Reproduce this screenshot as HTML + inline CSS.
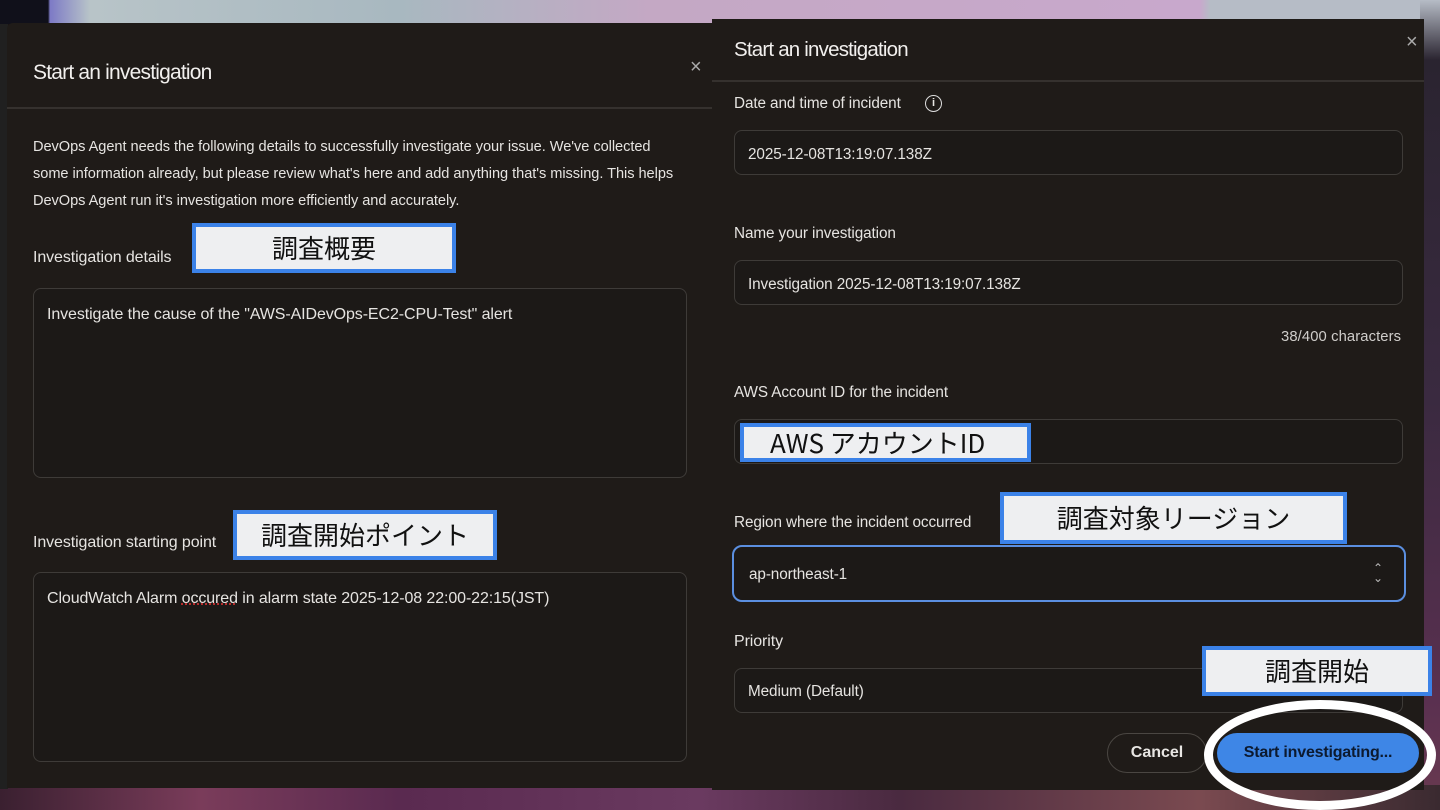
<!DOCTYPE html>
<html><head><meta charset="utf-8"><style>
*{margin:0;padding:0;box-sizing:border-box}
body{width:1440px;height:810px;overflow:hidden;position:relative;background:#1a1414;font-family:"Liberation Sans","Noto Sans CJK JP",sans-serif;color:#e8e6e3}
.a{position:absolute}
.t{font-size:15.3px;letter-spacing:-0.1px;color:#e6e4e1;white-space:nowrap}
.box{position:absolute;border:1px solid #3e3b38;border-radius:8px;background:#1c1917}
.lbl{position:absolute;background:#eeeff1;border:4px solid #3b82e8;color:#111;font-size:26px;font-family:"Noto Sans CJK JP",sans-serif;text-align:center;line-height:36px;white-space:nowrap}
</style></head><body>
<div class="a" style="left:0;top:0;width:1440px;height:24px;background:linear-gradient(90deg,#10101a 0,#10101a 48px,#7d7ac6 50px,#b8c4c8 90px,#a8b8c0 400px,#c4a8c4 650px,#c8a8cc 1200px,#b6bcc6 1210px,#b6bcc6 1440px)"></div>
<div class="a" style="left:1420px;top:0;width:20px;height:810px;background:linear-gradient(180deg,#b6bcc6 0,#2a2430 60px,#3a2a40 400px,#5a3050 700px,#6a3a50 810px)"></div>
<div class="a" style="left:0;top:785px;width:1440px;height:25px;background:linear-gradient(90deg,#3a2030,#7a3c5a 200px,#5a2a50 400px,#6a3a60 700px,#4a2a40 900px,#7a4a50 1200px,#3a2a30)"></div>
<div class="a" style="left:0;top:24px;width:8px;height:765px;background:#202020"></div>

<!-- Left panel -->
<div class="a" style="left:7px;top:23px;width:706px;height:765px;background:#1f1b18;border-radius:6px 0 0 0"></div>
<div class="a t" style="left:33px;top:61px;font-size:21px;letter-spacing:-0.8px;color:#f2f0ee">Start an investigation</div>
<div class="a" style="left:690px;top:56px;font-size:20px;color:#aaa">×</div>
<div class="a" style="left:7px;top:107px;width:706px;height:2px;background:#35312e"></div>
<div class="a t" style="left:33px;top:134px;line-height:27px;font-size:14.6px;letter-spacing:-0.05px">DevOps Agent needs the following details to successfully investigate your issue. We've collected<br>some information already, but please review what's here and add anything that's missing. This helps<br>DevOps Agent run it's investigation more efficiently and accurately.</div>
<div class="a t" style="left:33px;top:249px;font-size:16px">Investigation details</div>
<div class="box" style="left:33px;top:288px;width:654px;height:190px"></div>
<div class="a t" style="left:47px;top:306px;font-size:16px">Investigate the cause of the "AWS-AIDevOps-EC2-CPU-Test" alert</div>
<div class="a t" style="left:33px;top:534px;font-size:16px">Investigation starting point</div>
<div class="box" style="left:33px;top:572px;width:654px;height:190px"></div>
<div class="a t" style="left:47px;top:590px;font-size:16px">CloudWatch Alarm <span style="text-decoration:underline dotted #d33">occured</span> in alarm state 2025-12-08 22:00-22:15(JST)</div>
<div class="lbl" style="left:192px;top:223px;width:264px;height:50px;line-height:42px">調査概要</div>
<div class="lbl" style="left:233px;top:510px;width:264px;height:50px;line-height:42px">調査開始ポイント</div>

<!-- Right panel -->
<div class="a" style="left:712px;top:19px;width:712px;height:771px;background:#1f1b18"></div>
<div class="a t" style="left:734px;top:38px;font-size:20.5px;letter-spacing:-0.8px;color:#f2f0ee">Start an investigation</div>
<div class="a" style="left:1406px;top:31px;font-size:20px;color:#aaa">×</div>
<div class="a" style="left:712px;top:80px;width:712px;height:2px;background:#35312e"></div>
<div class="a t" style="left:734px;top:95px">Date and time of incident</div>
<div class="a" style="left:925px;top:95px;width:17px;height:17px;border:1.5px solid #ddd;border-radius:50%;font-size:11px;text-align:center;line-height:14px;font-weight:bold">i</div>
<div class="box" style="left:734px;top:130px;width:669px;height:45px"></div>
<div class="a t" style="left:748px;top:146px">2025-12-08T13:19:07.138Z</div>
<div class="a t" style="left:734px;top:225px">Name your investigation</div>
<div class="box" style="left:734px;top:260px;width:669px;height:45px"></div>
<div class="a t" style="left:748px;top:276px">Investigation 2025-12-08T13:19:07.138Z</div>
<div class="a t" style="left:1281px;top:329px;font-size:14.8px;letter-spacing:0.1px;color:#cfcdca">38/400 characters</div>
<div class="a t" style="left:734px;top:384px">AWS Account ID for the incident</div>
<div class="box" style="left:734px;top:419px;width:669px;height:45px"></div>
<div class="a t" style="left:734px;top:514px">Region where the incident occurred</div>
<div class="box" style="left:732px;top:545px;width:674px;height:57px;border:2px solid #5b8fe0;border-radius:10px"></div>
<div class="a t" style="left:749px;top:566px">ap-northeast-1</div>
<div class="a" style="left:1373px;top:563px;font-size:12px;color:#bbb;line-height:10px">⌃<br>⌄</div>
<div class="a t" style="left:734px;top:633px;font-size:16px">Priority</div>
<div class="box" style="left:734px;top:668px;width:669px;height:45px"></div>
<div class="a t" style="left:748px;top:683px">Medium (Default)</div>
<div class="a" style="left:1107px;top:733px;width:100px;height:40px;border:1.5px solid #4a4642;border-radius:20px;text-align:center;line-height:38px;font-weight:bold;font-size:16px">Cancel</div>
<div class="a" style="left:1204px;top:700px;width:232px;height:110px;border:9px solid #fff;border-radius:50%"></div>
<div class="a" style="left:1217px;top:733px;width:202px;height:40px;background:#3e86e6;border-radius:20px;text-align:center;line-height:40px;font-weight:bold;font-size:16px;color:#0c1a30;letter-spacing:-0.2px">Start investigating...</div>
<div class="lbl" style="left:740px;top:423px;width:291px;height:39px;line-height:31px;text-align:left;padding-left:26px">AWS アカウントID</div>
<div class="lbl" style="left:1000px;top:492px;width:347px;height:52px;line-height:44px">調査対象リージョン</div>
<div class="lbl" style="left:1202px;top:646px;width:230px;height:50px;line-height:42px">調査開始</div>
</body></html>
